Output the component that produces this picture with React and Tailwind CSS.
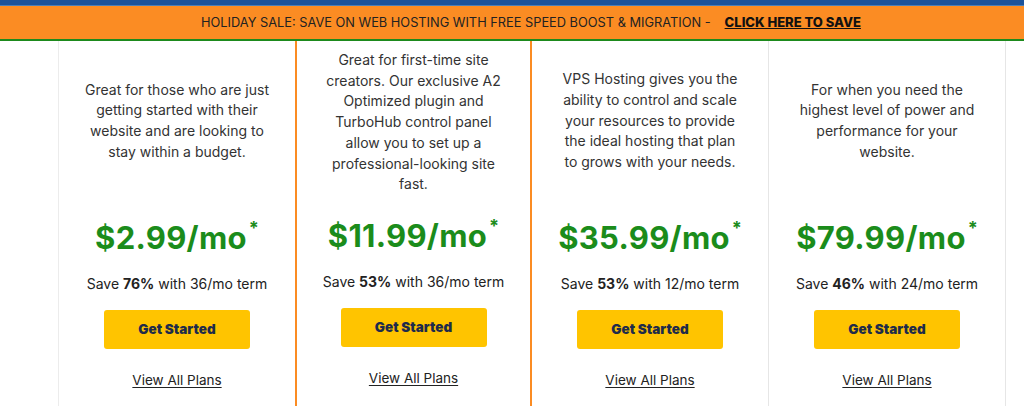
import React from "react";

const cards = [
  {
    lines: ["Great for those who are just", "getting started with their", "website and are looking to", "stay within a budget."],
    price: "$2.99/mo",
    pct: "76%",
    term: "36/mo",
    featured: false,
  },
  {
    lines: ["Great for first-time site", "creators. Our exclusive A2", "Optimized plugin and", "TurboHub control panel", "allow you to set up a", "professional-looking site", "fast."],
    price: "$11.99/mo",
    pct: "53%",
    term: "36/mo",
    featured: true,
  },
  {
    lines: ["VPS Hosting gives you the", "ability to control and scale", "your resources to provide", "the ideal hosting that plan", "to grows with your needs."],
    price: "$35.99/mo",
    pct: "53%",
    term: "12/mo",
    featured: false,
  },
  {
    lines: ["For when you need the", "highest level of power and", "performance for your", "website."],
    price: "$79.99/mo",
    pct: "46%",
    term: "24/mo",
    featured: false,
  },
];

function Card({ c, idx }) {
  const border =
    idx === 0
      ? "border-l border-l-[#ececec]"
      : idx === 1
      ? "border-x-2 border-x-[#fb8c23]"
      : "border-r border-r-[#e6e6e6]";
  return (
    <div className={`w-[237px] shrink-0 flex flex-col items-center ${border}`}>
      <div
        className={`h-[151px] w-full flex flex-col items-center text-center text-[14px] leading-[20.7px] text-[#333] ${
          c.featured ? "justify-start pt-[9px]" : "justify-center pt-[9px]"
        }`}
      >
        <div>
          {c.lines.map((l, i) => (
            <div key={i}>{l}</div>
          ))}
        </div>
      </div>
      <div className={`${c.featured ? "mt-[24px]" : "mt-[26px]"} flex items-start text-[#1b8c1b] font-bold`}>
        <span className="text-[31px] leading-[40px] tracking-[0.3px]">{c.price}</span>
        <span className="text-[18px] leading-[20px] ml-[2px]">*</span>
      </div>
      <div className="mt-[15px] text-[14px] leading-[21px] text-[#222]">
        Save <span className="font-bold">{c.pct}</span> with {c.term} term
      </div>
      <button className="mt-[16px] w-[146px] h-[39px] rounded-[3px] bg-[#ffc400] text-[#1e2b4a] font-black text-[13.5px]">
        Get Started
      </button>
      <a className="mt-[21px] text-[13.5px] leading-[21px] text-[#222] underline underline-offset-2">
        View All Plans
      </a>
      <div className="h-[30px]" />
    </div>
  );
}

export default function App() {
  return (
    <div className="w-[1024px] h-[406px] overflow-hidden bg-white" style={{ fontFamily: "Inter, 'Noto Sans', sans-serif" }}>
      <div className="h-[5px] bg-[#1b539b]" />
      <div className="h-px bg-[#4a7fb8]" />
      <div className="h-[33px] pl-[38px] bg-[#fb8c23] flex items-center justify-center text-[12.8px] text-[#222]">
        <span>HOLIDAY SALE: SAVE ON WEB HOSTING WITH FREE SPEED BOOST &amp; MIGRATION -</span>
        <a className="ml-[14px] text-[13px] font-extrabold underline text-[#111]">CLICK HERE TO SAVE</a>
      </div>
      <div className="h-[2px] bg-[#1d8a1d]" />
      <div className="flex pl-[58px]">
        {cards.map((c, i) => (
          <Card key={i} c={c} idx={i} />
        ))}
      </div>
    </div>
  );
}
